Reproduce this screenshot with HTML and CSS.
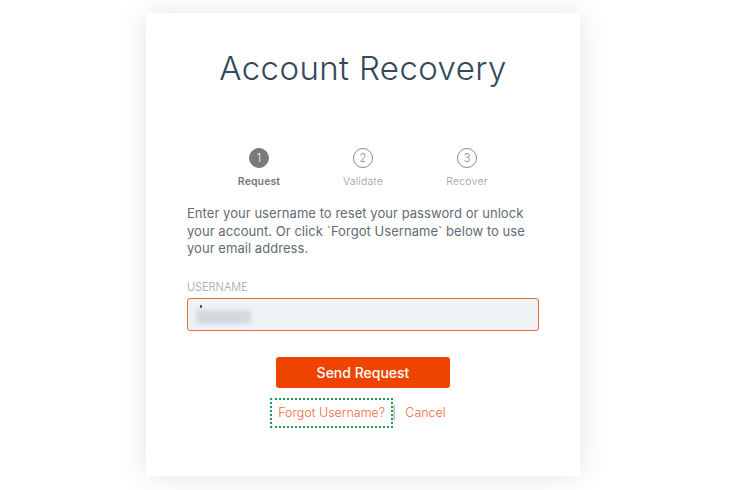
FILE: index.html
```html
<!DOCTYPE html>
<html>
<head>
<meta charset="utf-8">
<link rel="stylesheet" href="styles.css">
</head>
<body>
<div class="page">
  <main class="card">
    <h1 class="title">Account Recovery</h1>
    <ol class="steps">
      <li class="step active"><span class="num">1</span><span class="lbl">Request</span></li>
      <li class="step"><span class="num">2</span><span class="lbl">Validate</span></li>
      <li class="step"><span class="num">3</span><span class="lbl">Recover</span></li>
    </ol>
    <p class="intro">Enter your username to reset your password or unlock<br>your account. Or click `Forgot Username` below to use<br>your email address.</p>
    <label class="field-label">USERNAME</label>
    <div class="input"><span class="dot"></span><span class="blurred"></span></div>
    <div class="actions">
      <button class="btn">Send Request</button>
      <div class="links">
        <a class="link focused">Forgot Username?</a>
        <span class="sep">|</span>
        <a class="link">Cancel</a>
      </div>
    </div>
  </main>
</div>
</body>
</html>
```
FILE: styles.css
```css
* { box-sizing: border-box; }
html, body { margin: 0; padding: 0; background: #fff; }
body { font-family: Inter, "Noto Sans", sans-serif; }
.page { padding: 13px 0 0 146px; height: 490px; overflow: hidden; }
.card {
  width: 434px; height: 463px; background: #fff;
  box-shadow: 0 0 28px rgba(0,0,0,0.11);
  padding: 35px 41px 0 41px;
  display: flex; flex-direction: column;
}
.title {
  margin: 0; text-align: center; font-weight: 300; font-size: 33px;
  line-height: 40px; color: #34495a; letter-spacing: 0.4px;
}
.steps {
  list-style: none; margin: 60px 0 0 0; padding: 0;
  display: flex; justify-content: center;
}
.step { width: 104px; display: flex; flex-direction: column; align-items: center; }
.num {
  width: 20px; height: 20px; border-radius: 50%; border: 1px solid #8a8a8a;
  display: flex; align-items: center; justify-content: center;
  font-size: 11px; font-weight: 300; color: #8a8a8a;
}
.active .num { background: #7a7a7a; border-color: #7a7a7a; color: #fff; }
.lbl { margin-top: 7px; font-size: 10.5px; line-height: 14px; color: #9a9a9a; font-weight: 300; letter-spacing: 0.2px; }
.active .lbl { color: #777; font-weight: 600; letter-spacing: 0.1px; }
.intro {
  margin: 16px 0 0 0; font-size: 13px; line-height: 17.5px; color: #5f6b76;
  font-weight: 400; letter-spacing: 0.05px;
}
.field-label {
  margin-top: 22px; font-size: 11px; line-height: 14px; color: #a0a4a8; font-weight: 300;
}
.input {
  margin-top: 4px; height: 33px; border: 1px solid #ea6a3c; border-radius: 3px;
  background: #eef3f6; position: relative;
}
.dot { position: absolute; left: 12px; top: 6px; width: 2px; height: 3px; background: #556; }
.blurred {
  position: absolute; left: 8px; top: 11px; width: 55px; height: 14px;
  background: #d3d9df; filter: blur(2px);
}
.actions { display: flex; flex-direction: column; align-items: center; margin-top: 26px; }
.btn {
  width: 174px; height: 31px; border: 0; border-radius: 3px; background: #ee4400;
  color: #fff; font-family: inherit; font-size: 14px; font-weight: 500;
}
.links { margin-top: 12px; margin-left: -2px; display: flex; align-items: center; font-size: 12.5px; color: #f06a3a; }
.link { padding: 5px 6px; line-height: 16px; font-weight: 300; }
.focused { outline: 2px dotted #1f9d55; outline-offset: 0; box-shadow: 0 0 3px rgba(0,0,0,0.15); }
.sep { color: #999; margin: 0 3px 0 1px; }
```
